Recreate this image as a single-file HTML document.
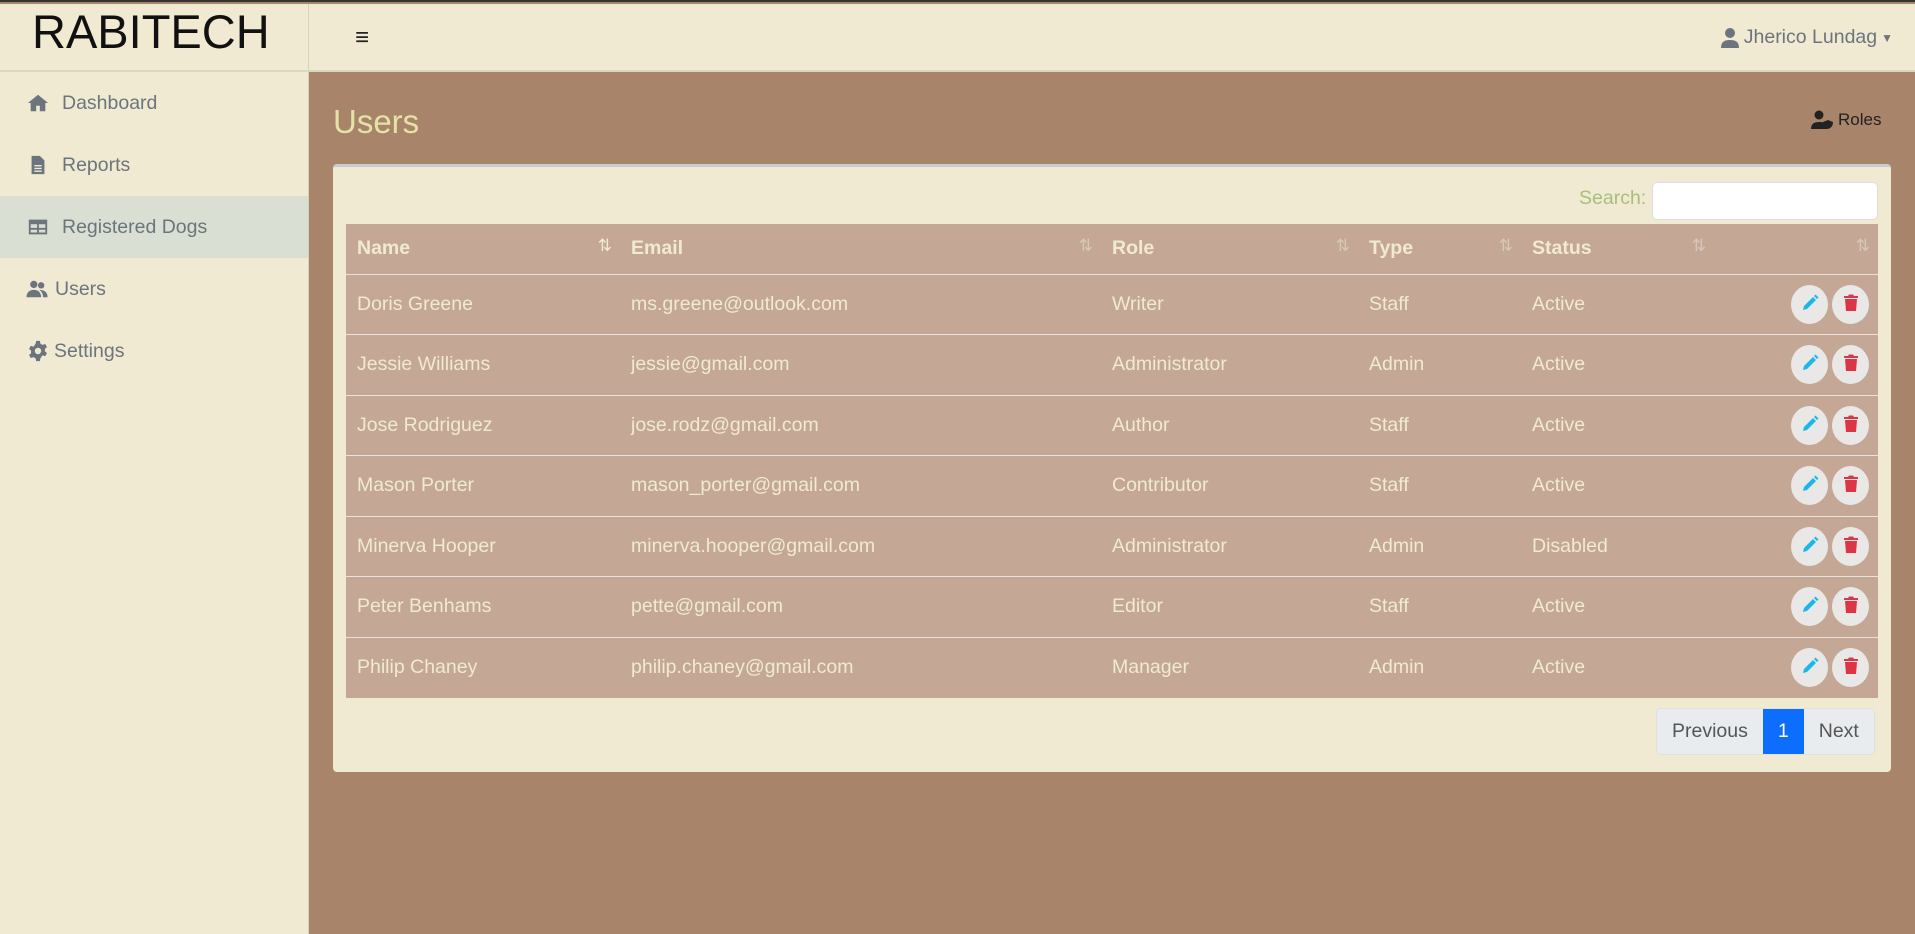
<!DOCTYPE html>
<html><head><meta charset="utf-8"><style>
*{box-sizing:border-box;margin:0;padding:0}
body{width:1915px;height:932px;overflow:hidden;font-family:"Liberation Sans",sans-serif;background:#a8846a;position:relative;border-top:2px solid #333}
.side{position:absolute;left:0;top:2px;width:309px;height:930px;background:#f0ead2;border-right:1px solid #d8d2bc}
.logo{height:68px;border-bottom:2px solid #ddd8c6;font-size:47px;color:#111;padding-left:32px;line-height:56px;letter-spacing:0}
.nav div{height:62px;display:flex;align-items:center;padding-left:27px;font-size:19.5px;color:#6c757d}
.nav div.act{background:#d9e0d3}
.nav svg{width:22px;height:22px;margin-right:13px;fill:#6c757d}
.top{position:absolute;left:309px;top:2px;right:0;height:68px;background:#f0ead2;border-bottom:2px solid #ddd3b8}
.ham{position:absolute;left:46px;top:20px;font-size:24px;color:#222}
.user{position:absolute;right:22px;top:22px;font-size:19.5px;color:#6c757d;display:flex;align-items:center}
h1{position:absolute;left:333px;top:101px;font-weight:normal;font-size:33px;color:#e3e3a6}
.roles{position:absolute;left:1811px;top:108px;font-size:17px;color:#222;display:flex;align-items:center}
.card{position:absolute;left:333px;top:162px;width:1558px;height:608px;background:#f0ead2;border-top:3px solid #c9ccd0;border-radius:4px}
.slab{position:absolute;left:1246px;top:20px;font-size:19.5px;color:#a9be7b}
.sin{position:absolute;left:1319px;top:15px;width:226px;height:38px;background:#fff;border:1px solid #ddd;border-radius:5px}
table{position:absolute;left:13px;top:57px;width:1532px;border-collapse:collapse;background:#c4a794;color:#f0ead2;font-size:19.5px}
th{height:50px;text-align:left;padding-left:11px;font-weight:bold;position:relative}
td{height:60.5px;padding-left:11px;border-top:1.5px solid #e8e4dc}
.s{position:absolute;right:8px;top:12px;font-size:17px;color:#d8c6b8;font-weight:normal}
.b{display:inline-block;width:37px;height:39px;border-radius:50%;background:#e9e8e6;vertical-align:middle;margin-left:4px;text-align:center;padding-top:9px}
.pg{position:absolute;left:1323px;top:541px;height:47px;display:flex;border:1px solid #dde0e4;border-radius:5px;overflow:hidden;font-size:19.5px}
.pg div{background:#e9ecef;color:#555;line-height:45px;padding:0 15px}
.pg .a{background:#0d6efd;color:#fff;padding:0 15px}
</style></head><body>
<div class="side"><div class="logo">RABITECH</div>
<div class="nav">
<div><svg viewBox="0 0 24 24"><path d="M12 3L1 12h3v9h6v-6h4v6h6v-9h3z"/></svg>Dashboard</div>
<div><svg viewBox="0 0 24 24"><path d="M5 2h9l5 5v15H5zM8 12h8v1.5H8zm0 3h8v1.5H8zm0 3h8v1.5H8z" fill-rule="evenodd"/></svg>Reports</div>
<div class="act"><svg viewBox="0 0 24 24"><path d="M2 4h20v16H2zM4 9h7v4H4zm9 0h7v4h-7zM4 15h7v3H4zm9 0h7v3h-7z" fill-rule="evenodd"/></svg>Registered Dogs</div>
<div style="padding-left:25px"><svg viewBox="0 0 24 24" style="margin-right:5px;width:25px"><circle cx="8" cy="7" r="4"/><circle cx="16" cy="8" r="3.5"/><path d="M0 21c0-5 3-8 8-8s8 3 8 8zM14 13c5 0 9 2 9 8h-5c0-3-1-6-4-8z"/></svg>Users</div>
<div><svg viewBox="0 0 24 24" style="margin-right:5px"><path d="M10 1h4l.6 3 2.3 1.3 2.9-1 2 3.4-2.3 2a7 7 0 010 2.600l2.3 2-2 3.4-2.9-1L14.6 20l-.6 3h-4l-.6-3-2.3-1.3-2.9 1-2-3.4 2.3-2a7 7 0 010-2.6l-2.3-2 2-3.4 2.9 1L9.4 4zM12 8.5a3.5 3.5 0 100 7 3.5 3.5 0 000-7z" fill-rule="evenodd"/></svg>Settings</div>
</div></div>
<div class="top"><div class="ham">&#8801;</div>
<div class="user"><svg width="18" height="20" viewBox="0 0 18 20" style="margin-right:5px"><circle cx="9" cy="5" r="5" fill="#6c757d"/><path d="M0 20c0-6 3-8 9-8s9 2 9 8z" fill="#6c757d"/></svg>Jherico Lundag<span style="font-size:12px;margin-left:4px">&#9660;</span></div></div>
<h1>Users</h1>
<div class="roles"><svg width="24" height="20" viewBox="0 0 24 20" style="margin-right:3px"><circle cx="8" cy="5" r="4.5" fill="#222"/><path d="M0 19c0-5 3-7 8-7s7 1 8 3v4z" fill="#222"/><path d="M17 10l5 2c0 4-2 6-5 7-3-1-5-3-5-7z" fill="#222"/></svg>Roles</div>
<div class="card">
<div class="slab">Search:</div><div class="sin"></div>
<table>
<tr><th style="width:274px">Name<span class="s" style="color:#f0ead2">&#8645;</span></th><th style="width:481px">Email<span class="s">&#8645;</span></th><th style="width:257px">Role<span class="s">&#8645;</span></th><th style="width:163px">Type<span class="s">&#8645;</span></th><th style="width:193px">Status<span class="s">&#8645;</span></th><th><span class="s">&#8645;</span></th></tr>
<tr><td>Doris Greene</td><td>ms.greene@outlook.com</td><td>Writer</td><td>Staff</td><td>Active</td><td class="x"></td></tr>
<tr><td>Jessie Williams</td><td>jessie@gmail.com</td><td>Administrator</td><td>Admin</td><td>Active</td><td class="x"></td></tr>
<tr><td>Jose Rodriguez</td><td>jose.rodz@gmail.com</td><td>Author</td><td>Staff</td><td>Active</td><td class="x"></td></tr>
<tr><td>Mason Porter</td><td>mason_porter@gmail.com</td><td>Contributor</td><td>Staff</td><td>Active</td><td class="x"></td></tr>
<tr><td>Minerva Hooper</td><td>minerva.hooper@gmail.com</td><td>Administrator</td><td>Admin</td><td>Disabled</td><td class="x"></td></tr>
<tr><td>Peter Benhams</td><td>pette@gmail.com</td><td>Editor</td><td>Staff</td><td>Active</td><td class="x"></td></tr>
<tr><td>Philip Chaney</td><td>philip.chaney@gmail.com</td><td>Manager</td><td>Admin</td><td>Active</td><td class="x"></td></tr>
</table>
<div class="pg"><div>Previous</div><div class="a">1</div><div>Next</div></div>
</div>
<script>
document.querySelectorAll('td.x').forEach(function(t){t.style.textAlign='right';t.style.paddingRight='9px';t.innerHTML='<span class="b"><svg width="18" height="18" viewBox="0 0 18 18"><path d="M2 16l1-4 9-9 3 3-9 9zM13 2l1.5-1.5 3 3L16 5z" fill="#1ab8e8"/></svg></span><span class="b"><svg width="16" height="18" viewBox="0 0 16 18"><path d="M1 2h4l1-1.5h4L11 2h4v2H1zM2 5h12l-1 12H3z" fill="#dc3545"/></svg></span>'});
</script>
</body></html>
